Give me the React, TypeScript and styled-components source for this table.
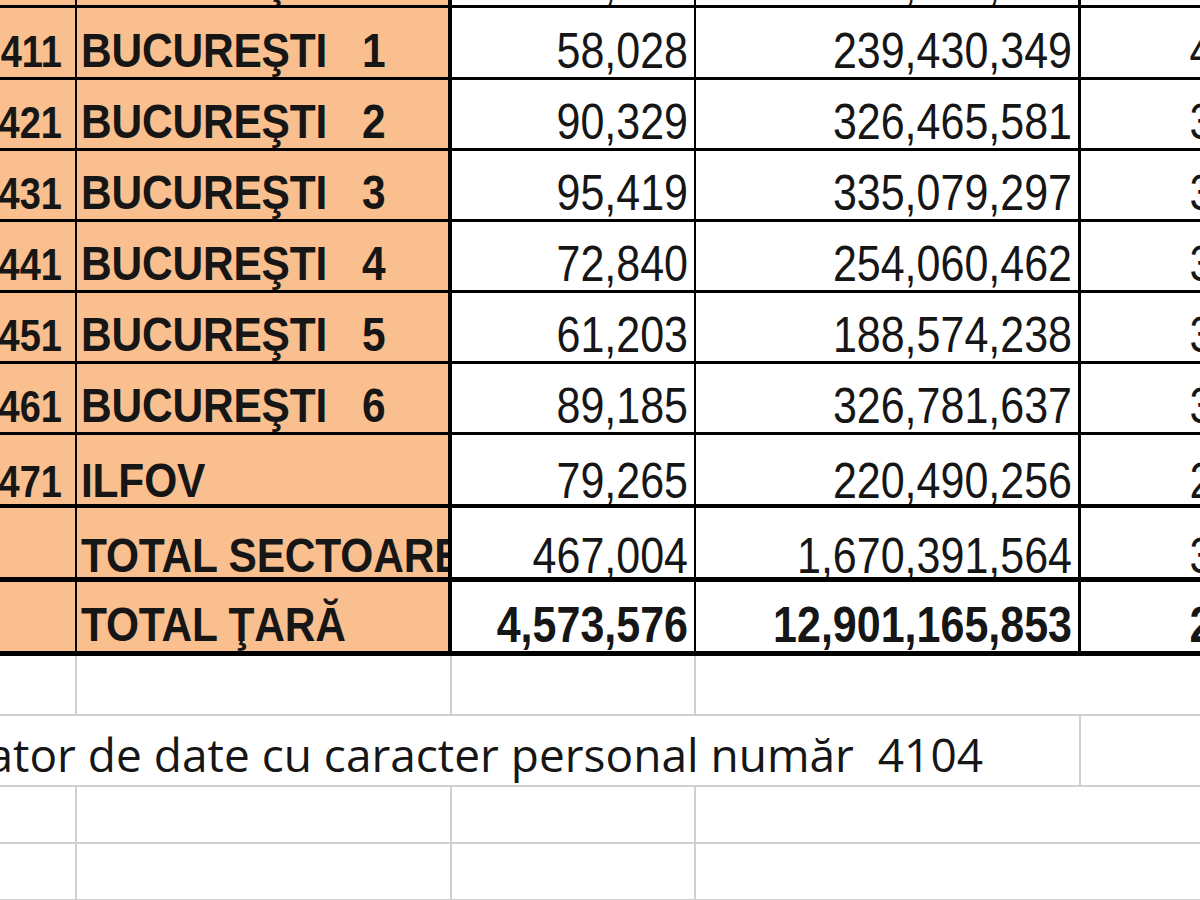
import React from 'react'
import styled, { createGlobalStyle } from 'styled-components'

const PEACH = '#fabf8f'
const INK = '#161616'
const GRID = '#d0d0d0'

const GlobalStyle = createGlobalStyle`
  html,
  body {
    margin: 0;
    padding: 0;
    background: #fff;
    overflow: hidden;
  }
  body {
    width: 1200px;
    height: 900px;
  }
`

type Entry = {
  code: string
  name: string
  c: string
  d: string
  e: string
  h: number
  rule: number
  pb: number
  bold?: boolean
}

// first entry is the row cut off by the top edge
const entries: Entry[] = [
  { code: '401', name: 'BUCUREŞTI', c: '61,204', d: '212,345,678', e: '3,456', h: 72, rule: 3, pb: 6 },
  { code: '411', name: 'BUCUREŞTI   1', c: '58,028', d: '239,430,349', e: '4,126', h: 72, rule: 3, pb: 9 },
  { code: '421', name: 'BUCUREŞTI   2', c: '90,329', d: '326,465,581', e: '3,614', h: 71, rule: 3, pb: 9 },
  { code: '431', name: 'BUCUREŞTI   3', c: '95,419', d: '335,079,297', e: '3,512', h: 71, rule: 3, pb: 9 },
  { code: '441', name: 'BUCUREŞTI   4', c: '72,840', d: '254,060,462', e: '3,488', h: 71, rule: 3, pb: 9 },
  { code: '451', name: 'BUCUREŞTI   5', c: '61,203', d: '188,574,238', e: '3,081', h: 71, rule: 3, pb: 9 },
  { code: '461', name: 'BUCUREŞTI   6', c: '89,185', d: '326,781,637', e: '3,664', h: 71, rule: 3, pb: 9 },
  { code: '471', name: 'ILFOV', c: '79,265', d: '220,490,256', e: '2,782', h: 73, rule: 4, pb: 6 },
  { code: '', name: 'TOTAL SECTOARE', c: '467,004', d: '1,670,391,564', e: '3,577', h: 74, rule: 5, pb: 4 },
  { code: '', name: 'TOTAL ŢARĂ', c: '4,573,576', d: '12,901,165,853', e: '2,821', h: 74, rule: 5, pb: 9, bold: true },
]

const blankRows = [60, 57, 57]

export default function App() {
  return (
    <>
      <GlobalStyle />
      <Sheet>
        {entries.map((r, i) => (
          <Line key={i} $h={r.h} $rule={r.rule}>
            <CodeCell $w={77} $edge={2} $pb={r.pb}>
              <Code>{r.code}</Code>
            </CodeCell>
            <NameCell $w={375} $edge={4} $pb={r.pb}>
              <Name>{r.name}</Name>
            </NameCell>
            <NumCell $w={244} $edge={2} $pb={r.pb}>
              <Num $bold={r.bold}>{r.c}</Num>
            </NumCell>
            <NumCell $w={385} $edge={3} $pb={r.pb}>
              <Num $bold={r.bold}>{r.d}</Num>
            </NumCell>
            <NumCell $w={222} $pb={r.pb}>
              <Num $bold={r.bold}>{r.e}</Num>
            </NumCell>
          </Line>
        ))}

        <BlankLine h={blankRows[0]} />
        <Line $h={71} $rule={2} $soft>
          <Note $w={1081} $edge={2} $soft $pb={12}>
            <NoteText>{'Operator de date cu caracter personal număr  4104'}</NoteText>
          </Note>
          <Cell $w={222} />
        </Line>
        <BlankLine h={blankRows[1]} />
        <BlankLine h={blankRows[2]} />
      </Sheet>
    </>
  )
}

function BlankLine({ h }: { h: number }) {
  return (
    <Line $h={h} $rule={2} $soft>
      <Cell $w={77} $edge={2} $soft />
      <Cell $w={375} $edge={2} $soft />
      <Cell $w={244} $edge={2} $soft />
      <Cell $w={385} />
      <Cell $w={222} />
    </Line>
  )
}

const Sheet = styled.div`
  width: 1303px;
  margin-top: -64px;
  background: #fff;
`

const Line = styled.div<{ $h: number; $rule: number; $soft?: boolean }>`
  display: flex;
  box-sizing: border-box;
  height: ${(p) => p.$h}px;
  border-bottom: ${(p) => p.$rule}px solid ${(p) => (p.$soft ? GRID : '#000')};
`

const Cell = styled.div<{ $w: number; $edge?: number; $soft?: boolean; $pb?: number }>`
  flex: none;
  box-sizing: border-box;
  width: ${(p) => p.$w}px;
  height: 100%;
  display: flex;
  align-items: flex-end;
  overflow: hidden;
  background: #fff;
  padding-bottom: ${(p) => p.$pb ?? 0}px;
  border-right: ${(p) => p.$edge ?? 0}px solid ${(p) => (p.$soft ? GRID : '#000')};
`

const CodeCell = styled(Cell)`
  background: ${PEACH};
  justify-content: flex-end;
  padding-right: 13px;
`

const NameCell = styled(Cell)`
  background: ${PEACH};
  justify-content: flex-start;
  padding-left: 4px;
`

const NumCell = styled(Cell)`
  justify-content: flex-end;
  padding-right: 6px;
`

const Note = styled(Cell)`
  justify-content: flex-end;
  padding-right: 96px;
`

// excel text is drawn narrow; stretch vertically from the baseline
const Glyphs = styled.span`
  flex: none;
  display: inline-block;
  white-space: pre;
  line-height: 0.7;
  color: ${INK};
  font-family: 'Liberation Sans', Arial, sans-serif;
  transform: scaleY(1.15);
  transform-origin: 50% 100%;
`

const Code = styled(Glyphs)`
  font-size: 38px;
  font-weight: 700;
`

const Name = styled(Glyphs)`
  font-size: 42.5px;
  font-weight: 700;
  letter-spacing: -0.2px;
  transform: scaleY(1.12);
`

const Num = styled(Glyphs)<{ $bold?: boolean }>`
  font-size: 43px;
  font-weight: ${(p) => (p.$bold ? 700 : 400)};
`

const NoteText = styled.span`
  flex: none;
  white-space: pre;
  line-height: 0.776;
  color: ${INK};
  font-family: 'Open Sans', 'Noto Sans', sans-serif;
  font-size: 46px;
  font-weight: 500;
`
